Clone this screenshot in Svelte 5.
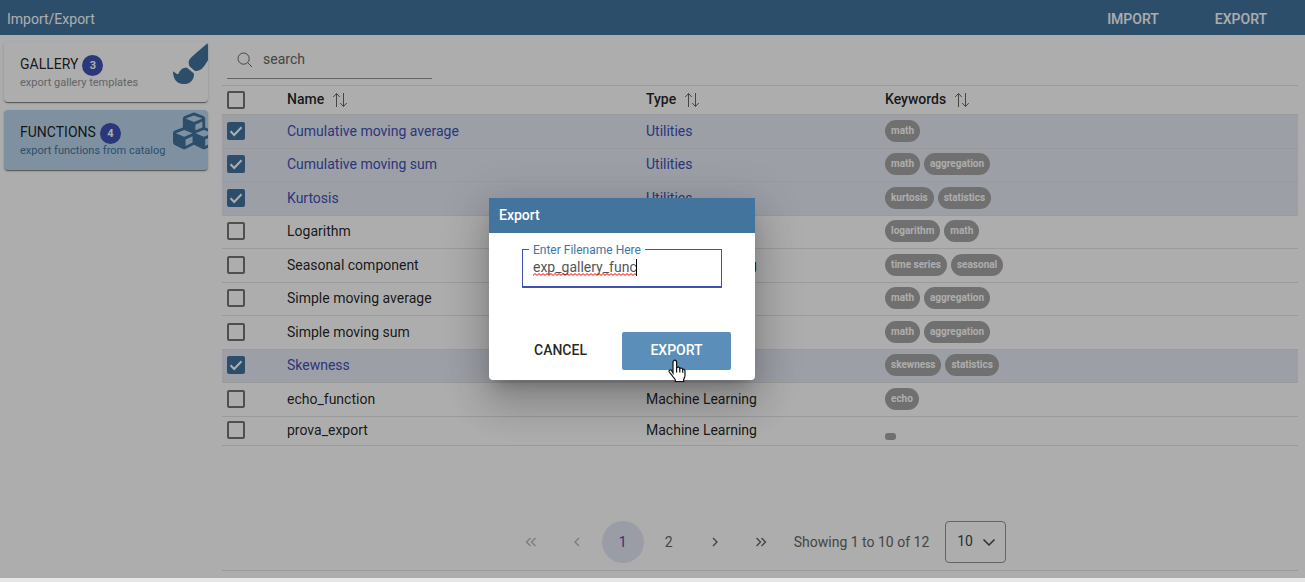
<script lang="ts">
  const sections = [
    { title: 'GALLERY', count: 3, text: 'export gallery templates', icon: 'brush', active: false },
    { title: 'FUNCTIONS', count: 4, text: 'export functions from catalog', icon: 'cubes', active: true }
  ];

  const columns = ['Name', 'Type', 'Keywords'];

  let rows = $state([
    { name: 'Cumulative moving average', type: 'Utilities', keywords: ['math'], selected: true },
    { name: 'Cumulative moving sum', type: 'Utilities', keywords: ['math', 'aggregation'], selected: true },
    { name: 'Kurtosis', type: 'Utilities', keywords: ['kurtosis', 'statistics'], selected: true },
    { name: 'Logarithm', type: 'Utilities', keywords: ['logarithm', 'math'], selected: false },
    { name: 'Seasonal component', type: 'Machine Learning', keywords: ['time series', 'seasonal'], selected: false },
    { name: 'Simple moving average', type: 'Utilities', keywords: ['math', 'aggregation'], selected: false },
    { name: 'Simple moving sum', type: 'Utilities', keywords: ['math', 'aggregation'], selected: false },
    { name: 'Skewness', type: 'Utilities', keywords: ['skewness', 'statistics'], selected: true },
    { name: 'echo_function', type: 'Machine Learning', keywords: ['echo'], selected: false },
    { name: 'prova_export', type: 'Machine Learning', keywords: [''], selected: false }
  ]);

  let filename = $state('exp_gallery_func');
</script>

<div class="page">
  <header class="topbar">
    <h1>Import/Export</h1>
    <nav>
      <button type="button">IMPORT</button>
      <button type="button">EXPORT</button>
    </nav>
  </header>

  <div class="content">
    <aside>
      {#each sections as s}
        <button type="button" class="card" class:active={s.active}>
          <span class="card-title">{s.title} <span class="count">{s.count}</span></span>
          <span class="card-text">{s.text}</span>
          <svg class="card-icon" viewBox="0 0 512 512" aria-hidden="true">
            {#if s.icon === 'brush'}
              <path d="M167.02 309.34c-40.12 2.58-76.53 17.86-97.19 72.3-2.35 6.21-8 9.98-14.59 9.98-11.11 0-45.46-27.67-55.25-34.35C0 439.62 37.93 512 128 512c75.86 0 128-43.77 128-120.19 0-3.11-.65-6.08-.97-9.13l-88.01-73.34zM457.89 0c-15.16 0-29.37 6.71-40.21 16.45C213.27 199.05 192 203.34 192 257.09c0 13.7 3.25 26.76 8.73 38.7l63.82 53.18c7.21 1.8 14.64 3.03 22.39 3.03 62.11 0 98.11-45.47 211.16-256.46 7.38-14.35 13.9-29.85 13.9-45.99C512 20.64 486 0 457.89 0z" />
            {:else}
              <path d="M488.6 250.2L392 214V105.5c0-15-9.3-28.4-23.4-33.7l-100-37.5c-8.1-3.1-17.1-3.1-25.3 0l-100 37.5c-14.1 5.3-23.4 18.7-23.4 33.7V214l-96.6 36.2C9.3 255.5 0 268.9 0 283.9V394c0 13.6 7.7 26.1 19.9 32.2l100 50c10.1 5.1 22.1 5.1 32.2 0l103.9-52 103.9 52c10.1 5.1 22.1 5.1 32.2 0l100-50c12.2-6.1 19.9-18.6 19.9-32.2V283.9c0-15-9.3-28.4-23.4-33.7zM358 214.8l-85 31.9v-68.2l85-37v73.3zM154 104.1l102-38.2 102 38.2v.6l-102 41.4-102-41.4v-.6zm84 291.1l-85 42.5v-79.1l85-38.8v75.4zm0-112l-102 41.4-102-41.4v-.6l102-38.2 102 38.2v.6zm240 112l-85 42.5v-79.1l85-38.8v75.4zm0-112l-102 41.4-102-41.4v-.6l102-38.2 102 38.2v.6z" />
            {/if}
          </svg>
        </button>
      {/each}
    </aside>

    <main>
      <label class="search">
        <svg viewBox="0 0 16 16" aria-hidden="true"><circle cx="6.6" cy="6.6" r="5.6" /><path d="M10.8 10.8 15 15" /></svg>
        <input type="text" placeholder="search" aria-label="search" />
      </label>

      <table>
        <colgroup><col class="c-check" /><col class="c-name" /><col class="c-type" /><col /></colgroup>
        <thead>
          <tr>
            <th><input type="checkbox" aria-label="Select all" /></th>
            {#each columns as c}
              <th>
                <span class="head">{c}
                  <svg viewBox="0 0 16 16" aria-hidden="true"><path d="M4.5 15V1.5M1.2 5 4.5 1.5 7.8 5M11.5 1v13.5M8.2 11l3.3 3.5 3.3-3.5" /></svg>
                </span>
              </th>
            {/each}
          </tr>
        </thead>
        <tbody>
          {#each rows as row}
            <tr class:selected={row.selected}>
              <td><input type="checkbox" aria-label={row.name} bind:checked={row.selected} /></td>
              <td>{row.name}</td>
              <td>{row.type}</td>
              <td><div class="chips">{#each row.keywords as k}<span class="chip">{k}</span>{/each}</div></td>
            </tr>
          {/each}
        </tbody>
      </table>

      <footer>
        <button type="button" aria-label="First page" disabled><svg viewBox="0 0 14 14"><path d="M6.5 3 2.5 7l4 4M11.5 3l-4 4 4 4" /></svg></button>
        <button type="button" aria-label="Previous page" disabled><svg viewBox="0 0 14 14"><path d="M9 3 5 7l4 4" /></svg></button>
        <button type="button" class="current">1</button>
        <button type="button">2</button>
        <button type="button" aria-label="Next page"><svg viewBox="0 0 14 14"><path d="m5 3 4 4-4 4" /></svg></button>
        <button type="button" aria-label="Last page"><svg viewBox="0 0 14 14"><path d="m2.5 3 4 4-4 4M7.5 3l4 4-4 4" /></svg></button>
        <span class="report">Showing 1 to 10 of 12</span>
        <span class="per-page">
          <select aria-label="Rows per page"><option>10</option><option>20</option></select>
          <svg viewBox="0 0 14 14" aria-hidden="true"><path d="m1.5 4.5 5.5 5.5 5.5-5.5" /></svg>
        </span>
      </footer>
    </main>
  </div>

  <div class="backdrop">
    <div class="dialog" role="dialog" aria-modal="true" aria-labelledby="dialog-title">
      <h2 id="dialog-title">Export</h2>
      <div class="dialog-body">
        <div class="field">
          <label for="filename">Enter Filename Here</label>
          <input id="filename" type="text" spellcheck="false" bind:value={filename} />
          <span class="squiggle"></span>
          <span class="caret"></span>
        </div>
      </div>
      <div class="actions">
        <button type="button" class="cancel">CANCEL</button>
        <button type="button" class="export">EXPORT
          <svg class="pointer" viewBox="0 0 18 24" aria-hidden="true">
            <path d="M5 14V3.2C5 .4 8.6.4 8.6 3.2V9c.6-1.3 3-1 3.2.6.7-1 2.7-.7 2.900.9 1-.7 2.300 0 2.300 1.600v4.500c0 1.800-1.400 3-1.400 4.300V22.500H7.300V21c0-1.200-2.300-2.800-3.100-4.300L1.300 13c-.9-1.500 1-2.800 2.200-1.600z" />
            <path d="M8.600 9v4.500M11.800 9.600v4M14.700 10.500v3.200" />
          </svg>
        </button>
      </div>
    </div>
  </div>
</div>

<style>
  :global(body) { margin: 0; background: #e6e6e6; }
  * { box-sizing: border-box; }
  .page {
    position: relative;
    display: flex;
    flex-direction: column;
    min-height: calc(100vh - 4px);
    background: #fff;
    color: rgba(0, 0, 0, 0.87);
    font: 14px/20px Roboto, sans-serif;
  }
  button, input, select { font: inherit; color: inherit; }
  button { border: 0; padding: 0; background: none; }
  svg { fill: none; stroke: currentColor; }

  .topbar {
    display: flex;
    align-items: center;
    justify-content: space-between;
    height: 35px;
    padding: 0 38px 0 7px;
    background: #43749e;
    color: #fff;
  }
  .topbar h1 { margin: 0; font-size: 14px; font-weight: 400; padding-top: 3px; }
  nav { display: flex; gap: 56px; padding-top: 3px; }
  nav button { font-weight: 500; }

  .content { flex: 1; display: flex; gap: 14px; padding: 7px 7px 7px 4px; }
  aside { width: 204px; display: flex; flex-direction: column; gap: 8px; }
  .card {
    position: relative;
    overflow: hidden;
    display: flex;
    flex-direction: column;
    height: 60px;
    padding: 11px 16px;
    border-radius: 4px;
    background: #fff;
    box-shadow: 0 2px 1px -1px rgba(0, 0, 0, 0.3), 0 1px 1px rgba(0, 0, 0, 0.2), 0 1px 3px rgba(0, 0, 0, 0.15);
    text-align: left;
  }
  .card.active { background: #bbd6ed; }
  .card-title { display: flex; align-items: center; gap: 4px; height: 22px; }
  .count {
    width: 21px;
    height: 21px;
    margin-top: 2px;
    border-radius: 50%;
    background: #3f51b5;
    color: #fff;
    font-size: 11px;
    font-weight: 700;
    line-height: 21px;
    text-align: center;
  }
  .card-text { font-size: 11px; line-height: 16px; color: #949494; white-space: nowrap; }
  .active .card-text { color: #43749e; }
  .card-icon {
    position: absolute;
    top: 0;
    right: -7px;
    width: 42px;
    height: 42px;
    fill: #43749e;
    stroke: none;
  }

  main { flex: 1; display: flex; flex-direction: column; border-bottom: 1px solid #e4e4e4; }
  .search {
    display: flex;
    align-items: center;
    gap: 10px;
    width: 205px;
    height: 37px;
    margin: 0 0 6px 5px;
    padding: 0 10px;
    border-bottom: 1px solid #949494;
    color: #666;
  }
  .search svg { width: 16px; height: 16px; flex: none; }
  .search input { width: 100%; border: 0; padding: 0 0 2px; outline: 0; background: none; }
  .search input::placeholder { color: #666; opacity: 1; }

  table { width: 100%; border-collapse: separate; border-spacing: 0; table-layout: fixed; border-top: 1px solid #e4e4e4; }
  .c-check { width: 60px; }
  .c-name { width: 359px; }
  .c-type { width: 239px; }
  th, td { padding: 0 5px; border-bottom: 1px solid #e4e4e4; text-align: left; font-weight: 400; vertical-align: middle; }
  td { padding-bottom: 2px; }
  th { height: 29px; font-weight: 500; }
  tbody tr { height: 33px; }
  tbody tr:nth-child(odd) { height: 34px; }
  tbody tr:last-child { height: 29px; }
  .selected { background: #e8eaf6; color: #3f51b5; }
  .head { display: flex; align-items: center; gap: 8px; padding-bottom: 2px; }
  .head svg { width: 16px; height: 16px; margin-top: 2px; color: #666; }

  input[type='checkbox'] {
    appearance: none;
    display: block;
    width: 18px;
    height: 18px;
    margin: 0;
    border: 2px solid #757575;
    border-radius: 2px;
  }
  input[type='checkbox']:checked {
    border-color: #43749e;
    background: #43749e url("data:image/svg+xml,%3Csvg xmlns='http://www.w3.org/2000/svg' viewBox='0 0 14 14'%3E%3Cpath d='M1.5 7.3 5.2 11 12.5 3.2' fill='none' stroke='white' stroke-width='2'/%3E%3C/svg%3E") center / 14px 14px no-repeat;
  }
  .chips { display: flex; gap: 4px; }
  .chip {
    padding: 3px 6px;
    border-radius: 11px;
    background: #a5a5a5;
    color: #fff;
    font-size: 10px;
    font-weight: 700;
    line-height: 16px;
  }
  .chip:empty { width: 11px; height: 7px; padding: 0; border-radius: 3px; margin-top: 12px; }

  footer {
    display: flex;
    align-items: center;
    justify-content: center;
    gap: 4px;
    margin-top: auto;
    padding: 8px 4px 7px 0;
    color: #666;
  }
  footer button { width: 42px; height: 42px; border-radius: 50%; }
  footer button svg { display: block; width: 14px; height: 14px; margin: auto; stroke-width: 1.4; }
  footer button:disabled { color: #b8b8b8; }
  footer .current { background: #e4e8f5; color: #3f51b5; }
  .report { padding: 0 12px 0 8px; }
  .per-page { position: relative; color: #444; }
  .per-page select {
    appearance: none;
    display: block;
    width: 61px;
    height: 42px;
    padding: 0 11px 2px;
    border: 1px solid #949494;
    border-radius: 4px;
    background: #fff;
  }
  .per-page svg { position: absolute; top: 14px; right: 10px; width: 14px; height: 14px; stroke-width: 1.5; pointer-events: none; }

  .backdrop {
    position: absolute;
    inset: 0;
    display: flex;
    align-items: center;
    justify-content: center;
    padding-right: 61px;
    background: rgba(0, 0, 0, 0.32);
  }
  .dialog {
    width: 266px;
    border-radius: 0 0 4px 4px;
    background: #fff;
    box-shadow: 0 11px 15px -7px rgba(0, 0, 0, 0.2), 0 24px 38px 3px rgba(0, 0, 0, 0.14), 0 9px 46px 8px rgba(0, 0, 0, 0.12);
  }
  .dialog h2 { margin: 0; height: 35px; padding: 0 10px; background: #43749e; color: #fff; font-size: 14px; font-weight: 500; line-height: 35px; }
  .dialog-body { padding: 16px 33px 44px; }
  .field { position: relative; }
  .field label { position: absolute; top: -7px; left: 7px; padding: 0 4px; background: #fff; color: #43749e; font-size: 12px; line-height: 16px; }
  .field input {
    display: block;
    width: 100%;
    height: 39px;
    padding: 0 10px 3px;
    border: 1px solid #3f51b5;
    border-bottom-width: 2px;
    outline: 0;
    color: #555;
  }
  .squiggle {
    position: absolute;
    top: 24px;
    left: 11px;
    width: 103px;
    height: 3px;
    background: url("data:image/svg+xml,%3Csvg xmlns='http://www.w3.org/2000/svg' viewBox='0 0 4 3'%3E%3Cpath d='M-1 1.5 0 2.400 2 .6 4 2.400 5 1.500' fill='none' stroke='red'/%3E%3C/svg%3E") 0 0 / 4px 3px repeat-x;
  }
  .caret { position: absolute; top: 10px; left: 114px; width: 1px; height: 17px; background: #000; }
  .actions { display: flex; align-items: center; justify-content: flex-end; gap: 8px; padding: 0 24px 10px 0; }
  .actions button { height: 38px; padding-bottom: 2px; font-weight: 500; }
  .cancel { width: 107px; }
  .export { position: relative; width: 109px; border-radius: 2px; background: #5b8fba; color: #fff; }
  .pointer { position: absolute; top: 27px; left: 46px; width: 18px; height: 24px; fill: #fff; stroke: #111; stroke-width: 1.2; }
</style>
